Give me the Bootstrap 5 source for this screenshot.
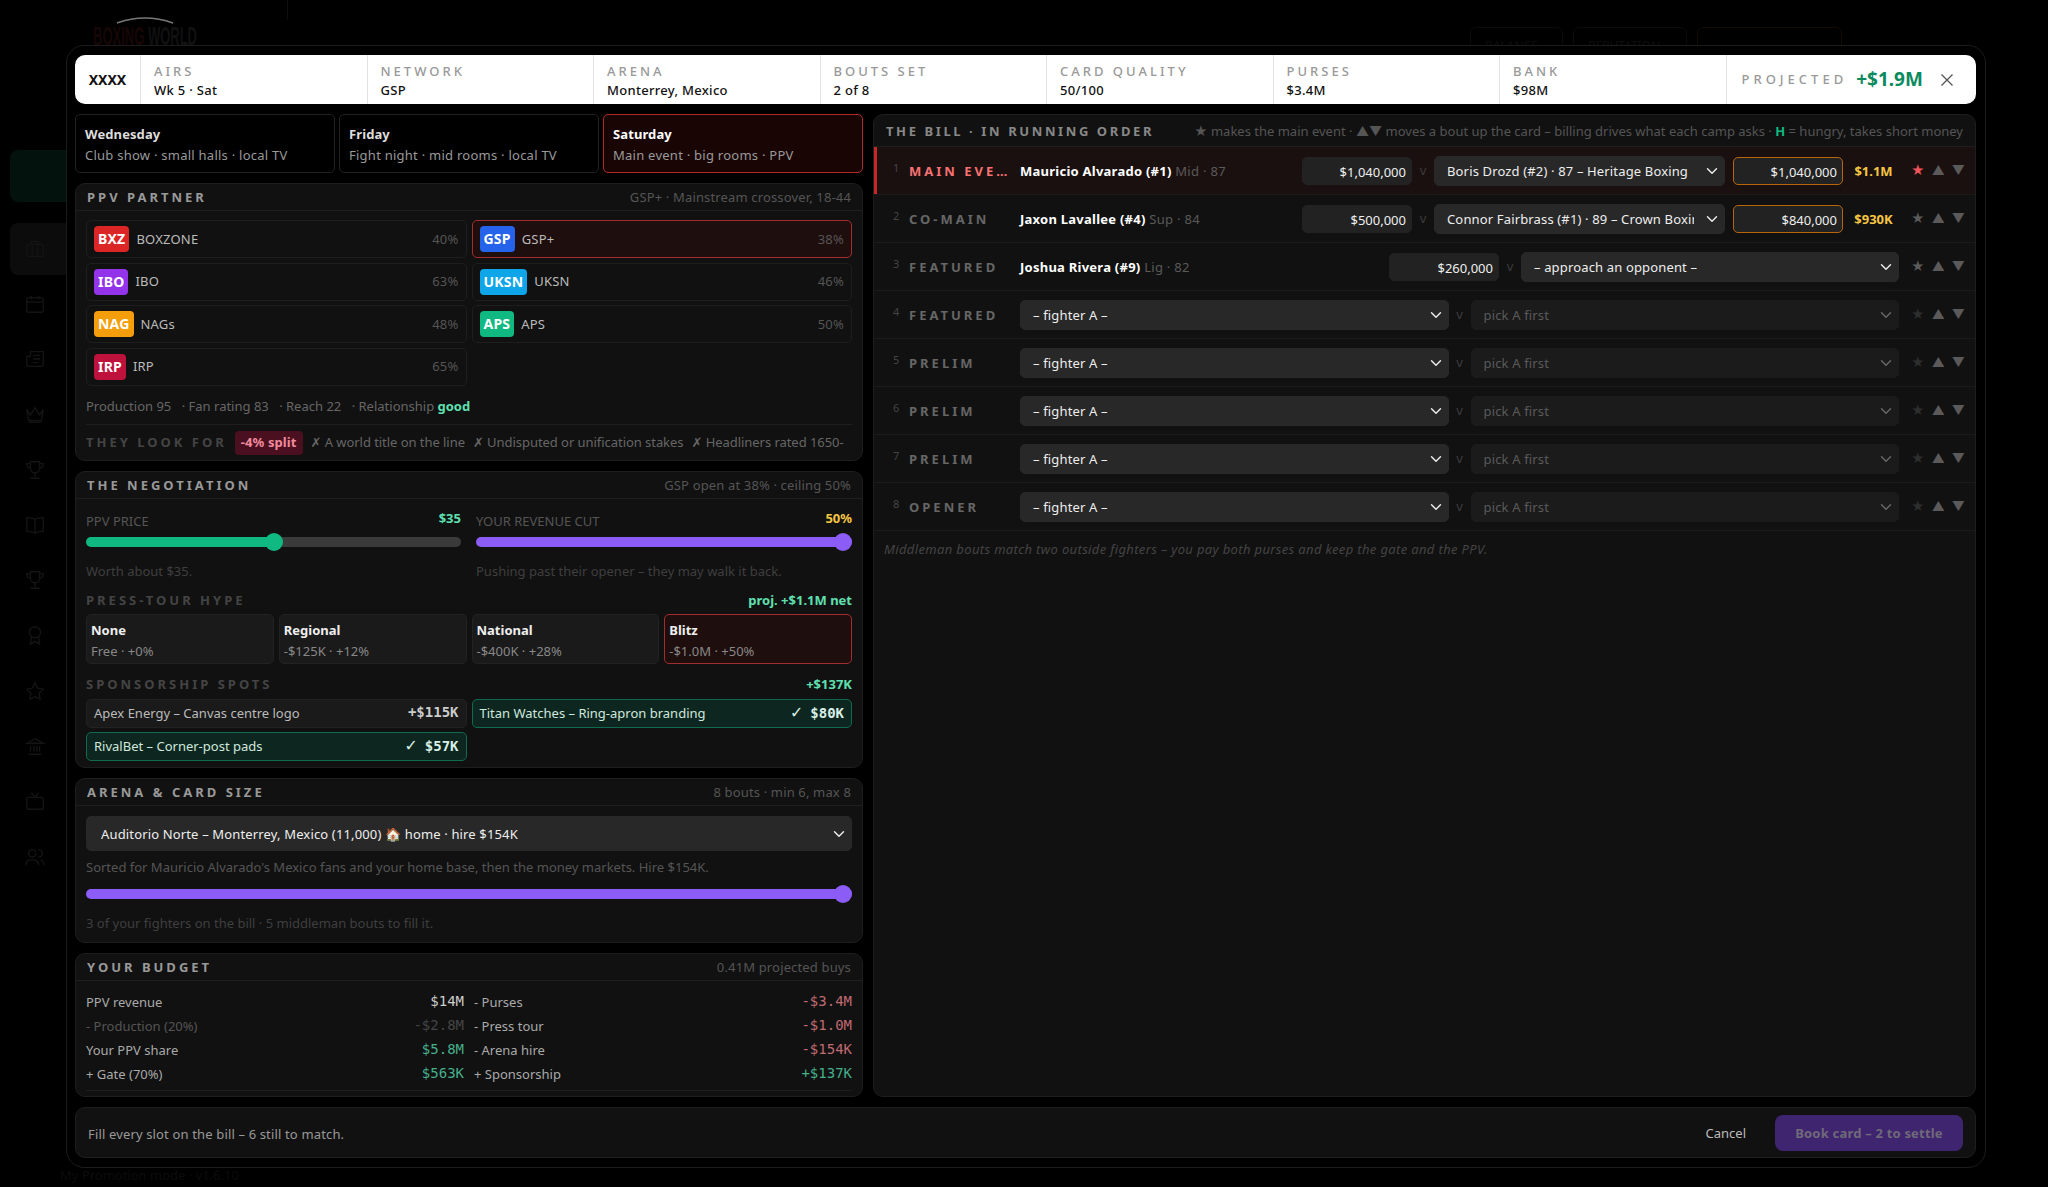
<!DOCTYPE html>
<html lang="en" data-bs-theme="dark">
<head>
    <meta charset="UTF-8">
    <meta name="viewport" content="width=device-width, initial-scale=1.0">
    <title>Book card</title>
    <link rel="stylesheet" href="https://cdn.jsdelivr.net/npm/bootstrap@5.3.0/dist/css/bootstrap.min.css">
    <style>
        body { background: #000; font-family: "Noto Sans", Inter, sans-serif; font-size: 13px; color: #ccc; height: 1187px; overflow: hidden; }

        /* dimmed app behind the modal */
        .bg-side { width: 70px; padding: 150px 0 0 10px; }
        .bg-green { height: 52px; background: #03120d; border-radius: 8px 0 0 8px; margin-bottom: 21px; }
        .bg-active { height: 52px; background: #0c0c0c; border-radius: 8px 0 0 8px; display: flex; align-items: center; padding-left: 14px; margin-bottom: 1px; }
        .bg-icon { height: 55.3px; display: flex; align-items: center; padding-left: 14px; }
        .bg-icon svg, .bg-active svg { width: 22px; height: 22px; fill: none; stroke: #141414; stroke-width: 1.5; }
        .bg-logo { top: 23px; left: 93px; font: 700 26px/1 "Liberation Sans", sans-serif; color: #160606; transform: scaleX(.5); transform-origin: left; white-space: nowrap; }
        .bg-logo span { color: #111; }
        .bg-arc { top: 15px; left: 115px; width: 60px; height: 10px; }
        .bg-line { top: 0; left: 287px; width: 1px; height: 20px; background: #0e0e0e; }
        .bg-box { top: 27px; height: 30px; border: 1px solid #0b0b0b; border-radius: 6px; color: #0e0e0e; font-size: 12px; padding: 12px 0 0 14px; line-height: 1; }
        .bg-foot { top: 1166px; left: 60px; color: #0c0c0c; font-size: 13px; white-space: nowrap; }

        /* modal */
        .mdl { position: fixed; left: 66px; top: 45px; width: 1920px; height: 1123px; background: #000; border: 1px solid #1c1c1c; border-radius: 18px; padding: 9px 9px 9px 8px; display: flex; flex-direction: column; gap: 10px; }

        .hdr { height: 49px; background: #fff; border-radius: 10px; display: flex; flex: none; color: #111; }
        .hdr-logo { width: 66px; display: flex; align-items: center; justify-content: center; font-weight: 700; font-size: 14px; border-right: 1px solid #e2e2e2; }
        .hdr-cell { width: 226.5px; padding: 7px 11px 0 13px; border-right: 1px solid #e2e2e2; line-height: 18px; }
        .hdr-cell b { display: block; font-size: 13px; font-weight: 500; color: #999; letter-spacing: 3px; }
        .hdr-cell span { display: block; font-size: 13px; font-weight: 500; letter-spacing: .3px; margin-top: 1px; }
        .hdr-proj { flex: 1; display: flex; align-items: center; padding-left: 15px; }
        .hdr-proj b { font-size: 13px; font-weight: 500; color: #999; letter-spacing: 4px; }
        .hdr-proj strong { font-size: 19px; font-weight: 700; color: #0b8a5e; margin-left: 9px; }
        .hdr-x { margin-left: 17px; width: 14px; height: 14px; }

        .mbody { flex: 1; display: flex; gap: 10px; min-height: 0; }
        .leftc { width: 788px; display: flex; flex-direction: column; gap: 10px; flex: none; }
        .rightc { flex: 1; }

        .day { flex: 1; height: 59px; background: #000; border: 1px solid #222; border-radius: 5px; padding: 9px; line-height: 21px; color: #999; letter-spacing: .25px; }
        .day b { display: block; color: #ddd; font-weight: 700; letter-spacing: .1px; }
        .day-on { background: #1a0505; border-color: #b02a2a; }
        .day-on b { color: #fff; }

        .pnl { background: #111; border: 1px solid #1e1e1e; border-radius: 10px; }
        .pnl-top { height: 27px; border-bottom: 1px solid #1e1e1e; display: flex; align-items: center; justify-content: space-between; padding: 2px 11px 0; font-size: 13px; color: #555; }
        .pnl-top b { font-size: 13px; font-weight: 700; letter-spacing: 3px; color: #999; }
        .pnl-top span { letter-spacing: .15px; }
        .pnl-in { padding: 9px 10px 0; }

        .ptr-grid { display: grid; grid-template-columns: 1fr 1fr; gap: 4.5px 5px; }
        .ptr { height: 38px; border: 1px solid #1e1e1e; border-radius: 5px; display: flex; align-items: center; padding: 1px 7px 0; color: #bbb; letter-spacing: .2px; }
        .ptr-on { background: #1f0e0e; border-color: #a32c2c; }
        .ptr i { font-style: normal; font-weight: 700; font-size: 14px; color: #fff; height: 26px; line-height: 26px; padding: 0 4px; border-radius: 4px; margin-right: 7px; margin-top: -1px; }
        .ptr em { margin-left: auto; font-style: normal; color: #555; }
        .stats { color: #666; margin-top: 11px; line-height: 18px; white-space: nowrap; }
        .stats span { margin-right: 7px; }
        .stats b { color: #5fe0b0; font-weight: 700; }
        .look { border-top: 1px solid #1e1e1e; margin-top: 9px; height: 38px; display: flex; align-items: center; white-space: nowrap; overflow: hidden; color: #666; gap: 8px; }
        .look b { font-weight: 700; letter-spacing: 3px; color: #444; }
        .look i { font-style: normal; font-weight: 700; background: #4a1020; color: #f08a9c; padding: 2px 6px; border-radius: 4px; letter-spacing: .1px; }
        .look span { letter-spacing: -.05px; }
        .look u { text-decoration: none; font-family: "DejaVu Sans", sans-serif; }

        .lbl2 { display: flex; justify-content: space-between; line-height: 18px; }
        .lbl2 span { color: #555; font-size: 13px; }
        .lbl2 b { font-weight: 700; font-size: 13px; position: relative; top: -3px; }
        .v-price { color: #5fe0b0; }
        .v-cut { color: #f5c542; }
        .sl-pair { display: grid; grid-template-columns: 375px 376px; column-gap: 15px; }
        .slide { display: block; width: 100%; height: 18px; margin: 3px 0 0; padding: 0; appearance: none; -webkit-appearance: none; background: transparent; }
        .slide::-webkit-slider-runnable-track { height: 10px; border-radius: 5px; background: linear-gradient(90deg, var(--c) var(--p), #3a3a3a var(--p)); }
        .slide::-webkit-slider-thumb { -webkit-appearance: none; width: 18px; height: 18px; margin-top: -4px; border-radius: 50%; background: var(--c); border: 0; }
        .note { color: #3f3f3f; line-height: 18px; }
        .note-top { margin-top: 11px; }

        .sec { display: flex; justify-content: space-between; align-items: center; line-height: 18px; margin: 11px 0 5px; }
        .sec b { font-weight: 700; letter-spacing: 3px; color: #444; }
        .sec span { font-weight: 700; color: #5fe0b0; }
        .hype-grid { display: grid; grid-template-columns: repeat(4, 1fr); gap: 5px; }
        .hype { height: 50px; background: #1a1a1a; border: 1px solid #222; border-radius: 5px; padding: 5px 4px; line-height: 21px; color: #888; }
        .hype b { display: block; color: #eee; font-weight: 700; }
        .hype-on { background: #1f0e0e; border-color: #a32c2c; }
        .spo-grid { display: grid; grid-template-columns: 1fr 1fr; gap: 4px 5px; margin-top: 6px; }
        .spo { height: 29px; background: #1a1a1a; border: 1px solid #222; border-radius: 5px; display: flex; align-items: center; justify-content: space-between; padding: 0 7px; color: #bbb; }
        .spo b { font: 700 14px "DejaVu Sans Mono", monospace; color: #ccc; position: relative; top: -2px; }
        .spo b span { font-size: 18px; line-height: 1; }
        .spo-on { background: #0e2620; border-color: #0f6b50; color: #cfe8dd; }
        .spo-on b { color: #d8f0e6; }

        .dk-select { height: 35px; background-color: #282828; border: 1px solid #282828; color: #eee; font-family: inherit; font-size: 13px; letter-spacing: .15px; padding: 2px 30px 0 14px; border-radius: 5px; background-image: url("data:image/svg+xml,%3csvg xmlns='http://www.w3.org/2000/svg' viewBox='0 0 16 16'%3e%3cpath fill='none' stroke='%23e8e8e8' stroke-linecap='round' stroke-linejoin='round' stroke-width='2' d='m2 5 6 6 6-6'/%3e%3c/svg%3e"); background-position: right 6px center; background-size: 12px 12px; }
        .dk-select:disabled { background-color: #1b1b1b; border-color: #1b1b1b; color: #5a5a5a; opacity: 1; background-image: url("data:image/svg+xml,%3csvg xmlns='http://www.w3.org/2000/svg' viewBox='0 0 16 16'%3e%3cpath fill='none' stroke='%23666' stroke-linecap='round' stroke-linejoin='round' stroke-width='2' d='m2 5 6 6 6-6'/%3e%3c/svg%3e"); }

        .bud { display: grid; grid-template-columns: 378px 378px; gap: 0 10px; }
        .bud-row { height: 24px; display: flex; justify-content: space-between; align-items: center; color: #aaa; }
        .bud-row b { font: 400 14px "DejaVu Sans Mono", monospace; position: relative; top: -2px; }
        .bud-dim { color: #555; }
        .v-g { color: #45b08c; }
        .v-r { color: #c06a72; }
        .v-w { color: #ccc; }
        .v-d { color: #444; }
        .bud-end { border-top: 1px solid #1e1e1e; margin-top: 3px; }

        .bill-top { height: 32px; border-bottom: 1px solid #1e1e1e; display: flex; align-items: center; justify-content: space-between; padding: 2px 12px 0; color: #555; white-space: nowrap; }
        .bill-top b { font-weight: 700; letter-spacing: 2.6px; color: #888; }
        .bill-top u { text-decoration: none; color: #10b981; font-weight: 700; }
        .bout { height: 48px; border-bottom: 1px solid #1b1b1b; display: flex; align-items: center; padding: 0 10px 0 19px; gap: 5px; }
        .bout-main { background: #1a100f; box-shadow: inset 3px 0 0 #c62828; }
        .bout-n { width: 11px; color: #444; font-size: 11px; position: relative; top: -2px; flex: none; }
        .bout-l { width: 106px; flex: none; font-weight: 700; letter-spacing: 3px; color: #666; white-space: nowrap; overflow: hidden; padding-top: 2px; }
        .bout-main .bout-l { color: #f87171; }
        .bout-name { flex: 1; color: #fff; font-weight: 700; white-space: nowrap; letter-spacing: .25px; padding-top: 2px; }
        .bout-name span { color: #5a5a5a; font-weight: 400; letter-spacing: .3px; }
        .bout-in { width: 110px; height: 28px; flex: none; background: #222; border: 1px solid #222; border-radius: 5px; text-align: right; color: #eee; padding: 1px 5px 0; font-size: 13px; line-height: 26px; }
        .bout-ask { border-color: #b8660c; margin-left: 3px; }
        .bout-v { width: 22px; flex: none; text-align: center; color: #3c3c3c; margin: 0 -5px; }
        .bout .dk-select { height: 30px; padding-left: 12px; }
        .bout-amt { width: 51px; flex: none; color: #f5c542; font-weight: 700; text-align: center; padding-top: 2px; }
        .bout-ctl { flex: none; width: 54px; margin-left: 7px; display: flex; justify-content: space-between; color: #5a5a5a; font-size: 13px; line-height: 1; }
        .star-dim { color: #2e2e2e; }
        .star-hot { color: #f2545b; }
        .bill-note { font-style: italic; color: #444; padding: 9px 10px; line-height: 18px; letter-spacing: .35px; }

        .ftr { height: 51px; flex: none; background: #111; border: 1px solid #1e1e1e; border-radius: 10px; display: flex; align-items: center; padding: 0 12px; color: #999; letter-spacing: .15px; }
        .ftr-cancel { margin-left: auto; color: #bbb; font-size: 13px; border: 0; background: none; padding: 3px 0 0; margin-right: 29px; }
        .ftr-book { height: 36px; width: 188px; font-weight: 700; font-size: 13px; letter-spacing: .2px; border: 0; border-radius: 8px; padding-top: 8px; }
        .ftr-book:disabled { background: #3f2470; color: #6f6a78; opacity: 1; }
    </style>
</head>
<body>
    <!-- dimmed app behind the modal -->
    <div class="bg-side">
        <div class="bg-green"></div>
        <div class="bg-active"><svg viewBox="0 0 24 24"><rect x="3" y="7" width="18" height="13" rx="2"/><path d="M8 7V4h8v3M9 7v13M15 7v13"/></svg></div>
        <div class="bg-icon"><svg viewBox="0 0 24 24"><rect x="3" y="5" width="18" height="16" rx="2"/><path d="M3 10h18M8 3v4M16 3v4"/></svg></div>
        <div class="bg-icon"><svg viewBox="0 0 24 24"><path d="M7 4h14v14a2 2 0 0 1-2 2H5a2 2 0 0 1-2-2V9h4zM10 8h8M10 12h8M10 16h5"/></svg></div>
        <div class="bg-icon"><svg viewBox="0 0 24 24"><path d="M3 7l4 6 5-8 5 8 4-6-2 12H5zM5 21h14"/></svg></div>
        <div class="bg-icon"><svg viewBox="0 0 24 24"><path d="M7 3h10v7a5 5 0 0 1-10 0zM7 5H3c0 4 2 5 4 5M17 5h4c0 4-2 5-4 5M12 15v5M7 21h10"/></svg></div>
        <div class="bg-icon"><svg viewBox="0 0 24 24"><path d="M12 6c-2-2-5-2-9-2v15c4 0 7 0 9 2 2-2 5-2 9-2V4c-4 0-7 0-9 2zM12 6v15"/></svg></div>
        <div class="bg-icon"><svg viewBox="0 0 24 24"><path d="M7 3h10v7a5 5 0 0 1-10 0zM7 5H3c0 4 2 5 4 5M17 5h4c0 4-2 5-4 5M12 15v5M7 21h10"/></svg></div>
        <div class="bg-icon"><svg viewBox="0 0 24 24"><circle cx="12" cy="9" r="6"/><path d="M8 14l-1 8 5-3 5 3-1-8"/></svg></div>
        <div class="bg-icon"><svg viewBox="0 0 24 24"><path d="M12 3l3 6 6 1-4.500 4.500 1 6.500-5.500-3-5.500 3 1-6.500L3 10l6-1z"/></svg></div>
        <div class="bg-icon"><svg viewBox="0 0 24 24"><path d="M3 9l9-5 9 5zM5 21h14M7 12v6M11 12v6M14 12v6M17 12v6"/></svg></div>
        <div class="bg-icon"><svg viewBox="0 0 24 24"><rect x="3" y="8" width="18" height="13" rx="2"/><path d="M8 3l4 5 4-5"/></svg></div>
        <div class="bg-icon"><svg viewBox="0 0 24 24"><circle cx="9" cy="8" r="4"/><path d="M2 21c0-4 3-6 7-6s7 2 7 6M16 4a4 4 0 0 1 0 8M18 15c2 1 4 3 4 6"/></svg></div>
    </div>
    <svg class="bg-arc position-absolute" viewBox="0 0 60 10"><path d="M2 8Q30-2 58 8" fill="none" stroke="#777" stroke-width="1.500"/></svg>
    <div class="bg-logo position-absolute">BOXING <span>WORLD</span></div>
    <div class="bg-line position-absolute"></div>
    <div class="bg-box position-absolute" style="left:1470px;width:93px">BALANCE</div>
    <div class="bg-box position-absolute" style="left:1573px;width:114px">REPUTATION</div>
    <div class="bg-box position-absolute" style="left:1697px;width:145px;border-color:#120c04"></div>
    <div class="bg-foot position-absolute">My Promotion mode · v1.6.10</div>

    <div class="mdl">
        <!-- summary strip -->
        <div class="hdr">
            <div class="hdr-logo">XXXX</div>
            <div class="hdr-cell"><b>AIRS</b><span>Wk 5 · Sat</span></div>
            <div class="hdr-cell"><b>NETWORK</b><span>GSP</span></div>
            <div class="hdr-cell"><b>ARENA</b><span>Monterrey, Mexico</span></div>
            <div class="hdr-cell"><b>BOUTS SET</b><span>2 of 8</span></div>
            <div class="hdr-cell"><b>CARD QUALITY</b><span>50/100</span></div>
            <div class="hdr-cell"><b>PURSES</b><span>$3.4M</span></div>
            <div class="hdr-cell"><b>BANK</b><span>$98M</span></div>
            <div class="hdr-proj">
                <b>PROJECTED</b><strong>+$1.9M</strong>
                <svg class="hdr-x" viewBox="0 0 14 14"><path d="M1.500 1.500l11 11M12.500 1.500l-11 11" stroke="#555" stroke-width="1.300" fill="none"/></svg>
            </div>
        </div>

        <div class="mbody">
            <div class="leftc">
                <div class="d-flex gap-1">
                    <div class="day"><b>Wednesday</b>Club show · small halls · local TV</div>
                    <div class="day"><b>Friday</b>Fight night · mid rooms · local TV</div>
                    <div class="day day-on"><b>Saturday</b>Main event · big rooms · PPV</div>
                </div>

                <!-- PPV partner -->
                <div class="pnl" style="height:278px">
                    <div class="pnl-top"><b>PPV PARTNER</b><span>GSP+ · Mainstream crossover, 18-44</span></div>
                    <div class="pnl-in">
                        <div class="ptr-grid">
                            <div class="ptr"><i style="background:#dc2626">BXZ</i>BOXZONE<em>40%</em></div>
                            <div class="ptr ptr-on"><i style="background:#2563eb">GSP</i>GSP+<em>38%</em></div>
                            <div class="ptr"><i style="background:#9333ea">IBO</i>IBO<em>63%</em></div>
                            <div class="ptr"><i style="background:#0ea5e9">UKSN</i>UKSN<em>46%</em></div>
                            <div class="ptr"><i style="background:#f59e0b">NAG</i>NAGs<em>48%</em></div>
                            <div class="ptr"><i style="background:#10b981">APS</i>APS<em>50%</em></div>
                            <div class="ptr"><i style="background:#be123c">IRP</i>IRP<em>65%</em></div>
                        </div>
                        <div class="stats"><span>Production 95</span> <span>· Fan rating 83</span> <span>· Reach 22</span> <span>· Relationship <b>good</b></span></div>
                        <div class="look"><b>THEY LOOK FOR</b><i>-4% split</i><span><u>✗</u> A world title on the line</span><span><u>✗</u> Undisputed or unification stakes</span><span><u>✗</u> Headliners rated 1650-</span></div>
                    </div>
                </div>

                <!-- Negotiation -->
                <div class="pnl" style="height:297px">
                    <div class="pnl-top"><b>THE NEGOTIATION</b><span>GSP open at 38% · ceiling 50%</span></div>
                    <div class="pnl-in">
                        <div class="sl-pair">
                            <div>
                                <div class="lbl2 mt-1"><span>PPV PRICE</span><b class="v-price">$35</b></div>
                                <input class="slide" type="range" value="50" style="--c:#10b981;--p:50%">
                            </div>
                            <div>
                                <div class="lbl2 mt-1"><span>YOUR REVENUE CUT</span><b class="v-cut">50%</b></div>
                                <input class="slide" type="range" value="100" style="--c:#8b5cf6;--p:100%">
                            </div>
                            <div class="note note-top">Worth about $35.</div>
                            <div class="note note-top">Pushing past their opener – they may walk it back.</div>
                        </div>
                        <div class="sec"><b>PRESS-TOUR HYPE</b><span>proj. +$1.1M net</span></div>
                        <div class="hype-grid">
                            <div class="hype"><b>None</b>Free · +0%</div>
                            <div class="hype"><b>Regional</b>-$125K · +12%</div>
                            <div class="hype"><b>National</b>-$400K · +28%</div>
                            <div class="hype hype-on"><b>Blitz</b>-$1.0M · +50%</div>
                        </div>
                        <div class="sec"><b>SPONSORSHIP SPOTS</b><span>+$137K</span></div>
                        <div class="spo-grid">
                            <div class="spo">Apex Energy – Canvas centre logo<b>+$115K</b></div>
                            <div class="spo spo-on">Titan Watches – Ring-apron branding<b><span>✓</span> $80K</b></div>
                            <div class="spo spo-on">RivalBet – Corner-post pads<b><span>✓</span> $57K</b></div>
                        </div>
                    </div>
                </div>

                <!-- Arena -->
                <div class="pnl" style="height:165px">
                    <div class="pnl-top"><b>ARENA &amp; CARD SIZE</b><span>8 bouts · min 6, max 8</span></div>
                    <div class="pnl-in" style="padding-top:10px">
                        <select class="form-select dk-select"><option>Auditorio Norte – Monterrey, Mexico (11,000) 🏠 home · hire $154K</option></select>
                        <div class="note" style="color:#555;margin-top:7px">Sorted for Mauricio Alvarado's Mexico fans and your home base, then the money markets. Hire $154K.</div>
                        <input class="slide" type="range" value="100" style="--c:#8b5cf6;--p:100%;margin-top:9px">
                        <div class="note" style="margin-top:11px">3 of your fighters on the bill · 5 middleman bouts to fill it.</div>
                    </div>
                </div>

                <!-- Budget -->
                <div class="pnl flex-grow-1">
                    <div class="pnl-top"><b>YOUR BUDGET</b><span>0.41M projected buys</span></div>
                    <div class="pnl-in" style="padding-top:10px">
                        <div class="bud">
                            <div class="bud-row">PPV revenue<b class="v-w">$14M</b></div>
                            <div class="bud-row">- Purses<b class="v-r">-$3.4M</b></div>
                            <div class="bud-row bud-dim">- Production (20%)<b class="v-d">-$2.8M</b></div>
                            <div class="bud-row">- Press tour<b class="v-r">-$1.0M</b></div>
                            <div class="bud-row">Your PPV share<b class="v-g">$5.8M</b></div>
                            <div class="bud-row">- Arena hire<b class="v-r">-$154K</b></div>
                            <div class="bud-row">+ Gate (70%)<b class="v-g">$563K</b></div>
                            <div class="bud-row">+ Sponsorship<b class="v-g">+$137K</b></div>
                        </div>
                        <div class="bud-end"></div>
                    </div>
                </div>
            </div>

            <!-- The bill -->
            <div class="rightc pnl">
                <div class="bill-top">
                    <b>THE BILL · IN RUNNING ORDER</b>
                    <span>★ makes the main event · ▲▼ moves a bout up the card – billing drives what each camp asks · <u>H</u> = hungry, takes short money</span>
                </div>
                <div class="bout bout-main">
                    <span class="bout-n">1</span><span class="bout-l">MAIN EVE…</span>
                    <span class="bout-name">Mauricio Alvarado (#1) <span>Mid · 87</span></span>
                    <span class="bout-in">$1,040,000</span><span class="bout-v">v</span>
                    <select class="form-select dk-select" style="width:291px"><option>Boris Drozd (#2) · 87 – Heritage Boxing</option></select>
                    <span class="bout-in bout-ask">$1,040,000</span><span class="bout-amt">$1.1M</span>
                    <span class="bout-ctl"><span class="star-hot">★</span><span>▲</span><span>▼</span></span>
                </div>
                <div class="bout">
                    <span class="bout-n">2</span><span class="bout-l">CO-MAIN</span>
                    <span class="bout-name">Jaxon Lavallee (#4) <span>Sup · 84</span></span>
                    <span class="bout-in">$500,000</span><span class="bout-v">v</span>
                    <select class="form-select dk-select" style="width:291px"><option>Connor Fairbrass (#1) · 89 – Crown Boxing</option></select>
                    <span class="bout-in bout-ask">$840,000</span><span class="bout-amt">$930K</span>
                    <span class="bout-ctl"><span>★</span><span>▲</span><span>▼</span></span>
                </div>
                <div class="bout">
                    <span class="bout-n">3</span><span class="bout-l">FEATURED</span>
                    <span class="bout-name">Joshua Rivera (#9) <span>Lig · 82</span></span>
                    <span class="bout-in">$260,000</span><span class="bout-v">v</span>
                    <select class="form-select dk-select" style="width:378px"><option>– approach an opponent –</option></select>
                    <span class="bout-ctl"><span>★</span><span>▲</span><span>▼</span></span>
                </div>
                <div class="bout"><span class="bout-n">4</span><span class="bout-l">FEATURED</span>
                    <select class="form-select dk-select flex-fill w-50"><option>– fighter A –</option></select><span class="bout-v">v</span>
                    <select class="form-select dk-select flex-fill w-50" disabled><option>pick A first</option></select>
                    <span class="bout-ctl"><span class="star-dim">★</span><span>▲</span><span>▼</span></span>
                </div>
                <div class="bout"><span class="bout-n">5</span><span class="bout-l">PRELIM</span>
                    <select class="form-select dk-select flex-fill w-50"><option>– fighter A –</option></select><span class="bout-v">v</span>
                    <select class="form-select dk-select flex-fill w-50" disabled><option>pick A first</option></select>
                    <span class="bout-ctl"><span class="star-dim">★</span><span>▲</span><span>▼</span></span>
                </div>
                <div class="bout"><span class="bout-n">6</span><span class="bout-l">PRELIM</span>
                    <select class="form-select dk-select flex-fill w-50"><option>– fighter A –</option></select><span class="bout-v">v</span>
                    <select class="form-select dk-select flex-fill w-50" disabled><option>pick A first</option></select>
                    <span class="bout-ctl"><span class="star-dim">★</span><span>▲</span><span>▼</span></span>
                </div>
                <div class="bout"><span class="bout-n">7</span><span class="bout-l">PRELIM</span>
                    <select class="form-select dk-select flex-fill w-50"><option>– fighter A –</option></select><span class="bout-v">v</span>
                    <select class="form-select dk-select flex-fill w-50" disabled><option>pick A first</option></select>
                    <span class="bout-ctl"><span class="star-dim">★</span><span>▲</span><span>▼</span></span>
                </div>
                <div class="bout"><span class="bout-n">8</span><span class="bout-l">OPENER</span>
                    <select class="form-select dk-select flex-fill w-50"><option>– fighter A –</option></select><span class="bout-v">v</span>
                    <select class="form-select dk-select flex-fill w-50" disabled><option>pick A first</option></select>
                    <span class="bout-ctl"><span class="star-dim">★</span><span>▲</span><span>▼</span></span>
                </div>
                <div class="bill-note">Middleman bouts match two outside fighters – you pay both purses and keep the gate and the PPV.</div>
            </div>
        </div>

        <div class="ftr">
            <span class="pt-1">Fill every slot on the bill – 6 still to match.</span>
            <button class="ftr-cancel" type="button">Cancel</button>
            <button class="ftr-book btn" type="button" disabled>Book card – 2 to settle</button>
        </div>
    </div>
</body>
</html>
